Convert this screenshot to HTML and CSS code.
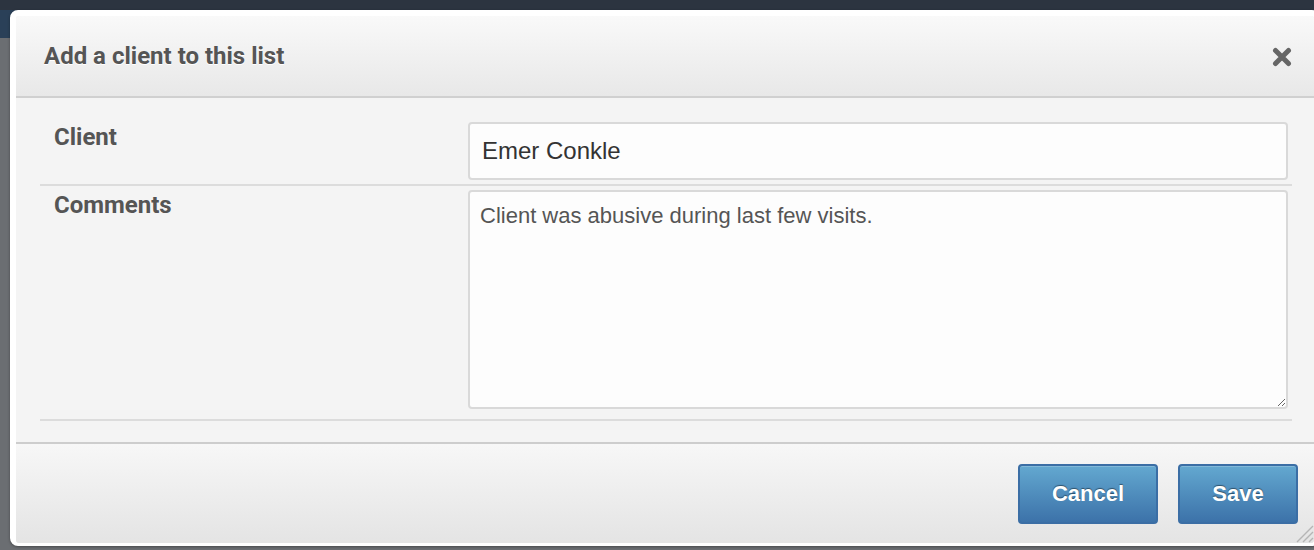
FILE: index.html
```html
<!DOCTYPE html>
<html>
<head>
<meta charset="utf-8">
<link rel="stylesheet" href="styles.css">
</head>
<body>
<div class="modal">
  <div class="modal-header">
    <h1 class="modal-title">Add a client to this list</h1>
    <button class="close" aria-label="Close">
      <svg width="20" height="20" viewBox="0 0 20 20"><path d="M3.5 3.5 L16.5 16.5 M16.5 3.5 L3.5 16.5" stroke="#666" stroke-width="5" stroke-linecap="round" fill="none"/></svg>
    </button>
  </div>
  <div class="modal-body">
    <div class="row">
      <label class="label">Client</label>
      <div class="field"><input class="input" type="text" value="Emer Conkle"></div>
    </div>
    <div class="row">
      <label class="label">Comments</label>
      <div class="field"><textarea class="textarea">Client was abusive during last few visits.</textarea></div>
    </div>
  </div>
  <div class="modal-footer">
    <button class="btn btn-cancel">Cancel</button>
    <button class="btn btn-save">Save</button>
  </div>
  <svg class="grip" width="22" height="22" viewBox="0 0 22 22"><path d="M21 5 L5 21 M21 11 L11 21 M21 17 L17 21" stroke="#b5b5b5" stroke-width="1.4" fill="none"/></svg>
</div>
</body>
</html>
```
FILE: styles.css
```css
html, body {
  margin: 0;
  padding: 0;
  height: 100%;
  overflow: hidden;
}
body {
  background: linear-gradient(to bottom, #2c3440 0, #2c3440 10px, #2a4058 10px, #2a4058 38px, #6b6e72 38px, #6b6e72 100%);
  font-family: Roboto, "Liberation Sans", Arial, sans-serif;
}
.modal {
  position: relative;
  margin: 10px 0 0 10px;
  width: 1298px;
  background: #f4f4f4;
  border: 6px solid #ffffff;
  border-bottom-width: 3px;
  border-radius: 8px;
  box-shadow: 0 1px 3px rgba(0,0,0,0.35);
  display: flex;
  flex-direction: column;
}
.modal-header {
  height: 80px;
  border-bottom: 2px solid #d0d0d0;
  background: linear-gradient(to bottom, #f9f9f9, #e8e8e8);
  display: flex;
  align-items: center;
  justify-content: space-between;
  padding: 0 22px 0 28px;
  border-radius: 3px 3px 0 0;
}
.modal-title {
  margin: 0;
  font-family: Roboto, sans-serif;
  font-weight: 700;
  font-size: 24px;
  color: #555555;
  text-shadow: 0 1px 0 #ffffff;
}
.close {
  border: 0;
  background: none;
  padding: 0;
  width: 20px;
  height: 20px;
  display: flex;
  margin-top: 2px;
}
.modal-body {
  padding: 24px 22px 21px 24px;
  height: 299px;
}
.row {
  display: grid;
  grid-template-columns: 428px 820px;
  border-bottom: 2px solid #dcdcdc;
  padding: 4px 0 4px 0;
}
.row:first-child {
  padding-top: 0;
}
.row:last-child {
  padding-bottom: 10px;
}
.label {
  padding: 1px 0 0 14px;
  font-family: Roboto, sans-serif;
  font-weight: 700;
  font-size: 24px;
  color: #555555;
}
.field {
  display: flex;
}
.input, .textarea {
  box-sizing: border-box;
  width: 820px;
  border: 2px solid #d9d9d9;
  border-radius: 4px;
  background: #fdfdfd;
  font-family: "Liberation Sans", Arial, sans-serif;
  margin: 0;
  outline: none;
}
.input {
  height: 58px;
  padding: 0 12px;
  font-size: 24px;
  color: #333333;
}
.textarea {
  height: 219px;
  padding: 10px 10px;
  font-size: 22px;
  line-height: 1.3;
  color: #555555;
  resize: vertical;
  display: block;
}
.modal-footer {
  border-top: 2px solid #cdcdcd;
  height: 101px;
  background: linear-gradient(to bottom, #f7f7f7, #e4e4e4);
  display: flex;
  justify-content: flex-end;
  align-items: flex-start;
  gap: 20px;
  padding: 20px 16px 0 0;
  box-sizing: border-box;
  border-radius: 0 0 3px 3px;
}
.btn {
  height: 60px;
  border: 2px solid #3b6ea5;
  border-radius: 4px;
  background: linear-gradient(to bottom, #63a8d0, #3c72a9);
  color: #ffffff;
  font-family: "Liberation Sans", Arial, sans-serif;
  font-weight: 700;
  font-size: 22px;
  text-shadow: 0 -1px 1px rgba(0,0,0,0.45);
  box-shadow: inset 0 1px 0 rgba(255,255,255,0.2);
  padding: 0;
}
.btn-cancel { width: 140px; }
.btn-save { width: 120px; }
.grip {
  position: absolute;
  right: 0;
  bottom: 0;
}
```
